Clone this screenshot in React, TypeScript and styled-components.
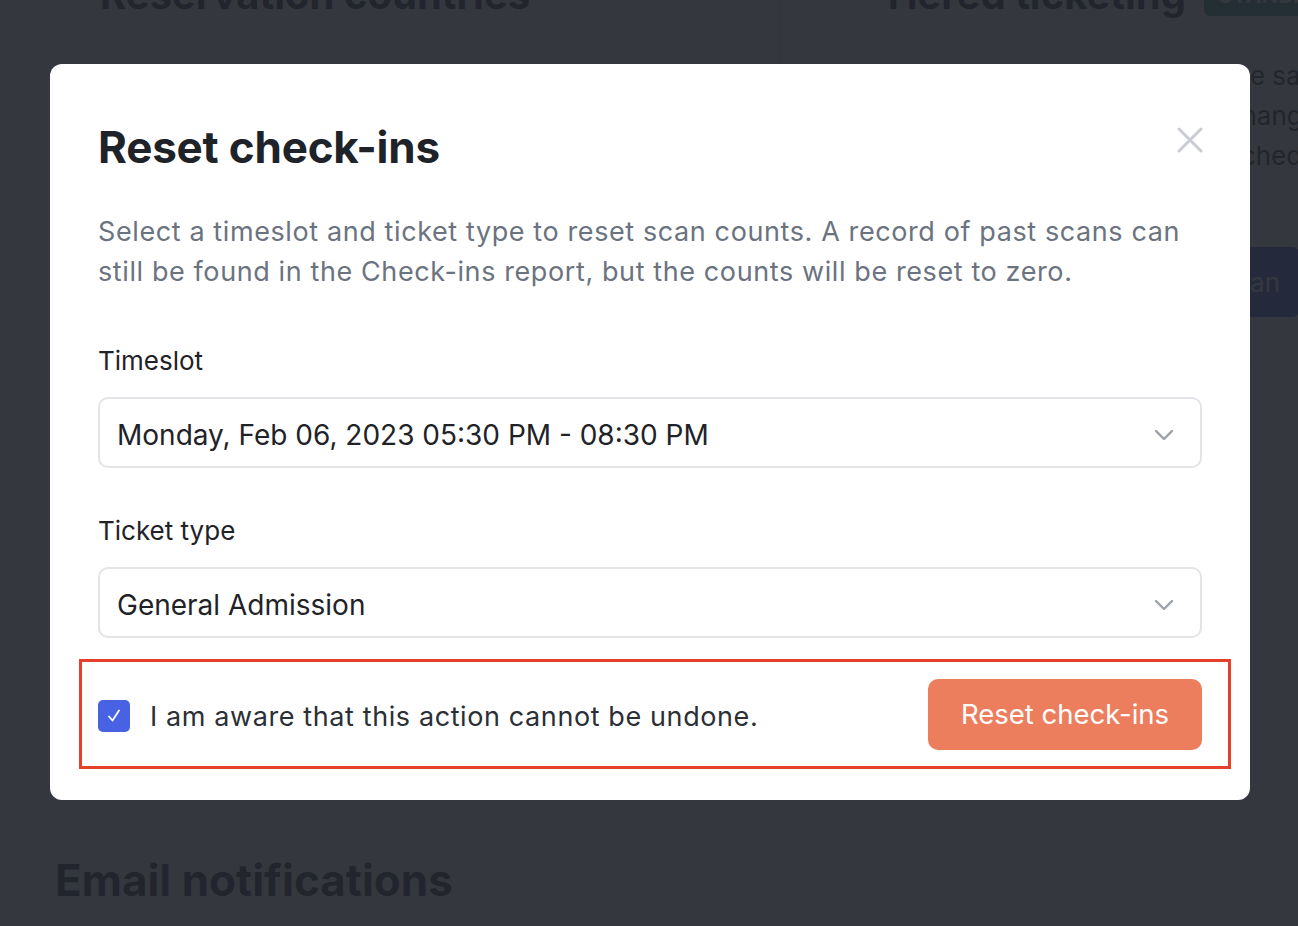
import React, { useState } from 'react';
import styled, { createGlobalStyle } from 'styled-components';

const GlobalStyle = createGlobalStyle`
  html, body {
    margin: 0;
    padding: 0;
    background: #ffffff;
    font-family: Inter, "Noto Sans", sans-serif;
    overflow: hidden;
  }
  * { box-sizing: border-box; }
`;

const Page = styled.div`
  width: 1298px;
  height: 926px;
  overflow: hidden;
  padding: 0 0 0 55px;
`;

const Columns = styled.div`
  display: grid;
  grid-template-columns: 725px 1fr;
  margin-top: -30px;
`;

const LeftCard = styled.div`
  border-right: 1px solid #d8dbe0;
  padding: 0 40px 0 45px;
  height: 340px;
`;

const RightCard = styled.div`
  padding: 0 0 0 100px;
  border-bottom: 1px solid #e4e6ea;
  height: 395px;
`;

const BgHeading = styled.h2`
  margin: 0;
  font-size: 40px;
  font-weight: 700;
  color: #1f2328;
  display: flex;
  align-items: center;
  gap: 18px;
  white-space: nowrap;
`;

const Badge = styled.span`
  background: #2a9d8f;
  color: #fff;
  font-size: 22px;
  padding: 8px 14px;
  border-radius: 6px;
`;

const BgText = styled.p<{ $top: number }>`
  margin: ${(p) => p.$top}px 0 0;
  font-size: 26px;
  line-height: 40px;
  color: #1f2328;
  white-space: nowrap;
`;

const BgLink = styled.span`
  color: #3b5bdb;
`;

const BgButton = styled.div`
  margin-top: 71px;
  margin-left: 240px;
  width: 180px;
  height: 70px;
  background: #3b5bdb;
  color: #fff;
  font-size: 26px;
  display: flex;
  align-items: center;
  justify-content: flex-end;
  padding-right: 20px;
  border-radius: 8px;
`;

const EmailHeading = styled.h2`
  margin: 488px 0 0;
  font-size: 44px;
  font-weight: 700;
  color: #1f2328;
`;

const Overlay = styled.div`
  position: fixed;
  inset: 0;
  background: rgba(35, 38, 46, 0.92);
  display: flex;
  align-items: flex-start;
  justify-content: flex-start;
  padding: 64px 0 0 50px;
`;

const Modal = styled.div`
  width: 1200px;
  height: 736px;
  background: #ffffff;
  border-radius: 12px;
  padding: 48px 48px 0 48px;
  display: flex;
  flex-direction: column;
`;

const Header = styled.div`
  display: flex;
  justify-content: space-between;
  align-items: flex-start;
  height: 70px;
`;

const Title = styled.h1`
  margin: 0;
  font-size: 44px;
  line-height: 70px;
  font-weight: 700;
  color: #1e2329;
  letter-spacing: -0.2px;
`;

const CloseButton = styled.button`
  border: none;
  background: none;
  padding: 0;
  width: 30px;
  height: 30px;
  margin-top: 13px;
  margin-right: -3px;
  display: flex;
  align-items: center;
  justify-content: center;
  cursor: pointer;
`;

const Description = styled.p`
  margin: 30px 0 0;
  font-size: 27px;
  letter-spacing: 0.6px;
  line-height: 40px;
  color: #6b7380;
`;

const Label = styled.div<{ $top: number }>`
  margin-top: ${(p) => p.$top}px;
  font-size: 26px;
  line-height: 36px;
  color: #1f2328;
`;

const Select = styled.div`
  margin-top: 18px;
  height: 71px;
  border: 2px solid #e2e4e8;
  border-radius: 10px;
  display: flex;
  align-items: center;
  justify-content: space-between;
  padding: 5px 26px 0 17px;
  font-size: 28px;
  color: #1f2328;
`;

const ConfirmRow = styled.div`
  margin: 21px -29px 0 -19px;
  border: 3px solid #e5402a;
  height: 110px;
  display: flex;
  align-items: center;
  justify-content: space-between;
  padding: 0 26px 0 16px;
`;

const CheckLabel = styled.label`
  display: flex;
  align-items: center;
  gap: 20px;
  padding-top: 4px;
  font-size: 27px;
  letter-spacing: 0.6px;
  color: #2b2f36;
  cursor: pointer;
`;

const CheckBox = styled.span<{ $checked: boolean }>`
  width: 32px;
  height: 32px;
  border-radius: 5px;
  background: ${(p) => (p.$checked ? '#4763e4' : '#fff')};
  border: ${(p) => (p.$checked ? 'none' : '2px solid #c4c8cf')};
  display: flex;
  align-items: center;
  justify-content: center;
`;

const ResetButton = styled.button`
  width: 274px;
  height: 71px;
  border: none;
  border-radius: 10px;
  background: #ec7e5e;
  color: #ffffff;
  font-family: inherit;
  font-size: 27.5px;
  cursor: pointer;
`;

const Chevron = () => (
  <svg width="20" height="12" viewBox="0 0 20 12" fill="none">
    <path d="M2 2l8 8 8-8" stroke="#9ba1a8" strokeWidth="2.4" strokeLinecap="round" strokeLinejoin="round" />
  </svg>
);

const App: React.FC = () => {
  const [checked, setChecked] = useState(true);

  return (
    <>
      <GlobalStyle />
      <Page>
        <Columns>
          <LeftCard>
            <BgHeading>Reservation countries</BgHeading>
            <BgText $top={45}>Add the countries in which you'd like to sell</BgText>
          </LeftCard>
          <RightCard>
            <BgHeading>
              Tiered ticketing <Badge>STANDARD</Badge>
            </BgHeading>
            <BgText $top={37}>
              Offer multiple price tiers for the same a<br />
              ticket type, and have prices change whe<br />
              a tier sells out or a date is reached. <BgLink>Le</BgLink>
            </BgText>
            <BgButton>Scan</BgButton>
          </RightCard>
        </Columns>
        <EmailHeading>Email notifications</EmailHeading>
      </Page>
      <Overlay>
        <Modal>
          <Header>
            <Title>Reset check-ins</Title>
            <CloseButton aria-label="Close">
              <svg width="26" height="26" viewBox="0 0 26 26" fill="none">
                <path d="M2 2l22 22M24 2L2 24" stroke="#c9cdd2" strokeWidth="3" strokeLinecap="round" />
              </svg>
            </CloseButton>
          </Header>
          <Description>
            Select a timeslot and ticket type to reset scan counts. A record of past scans can still be
            found in the Check-ins report, but the counts will be reset to zero.
          </Description>
          <Label $top={51}>Timeslot</Label>
          <Select>
            <span>Monday, Feb 06, 2023 05:30 PM - 08:30 PM</span>
            <Chevron />
          </Select>
          <Label $top={45}>Ticket type</Label>
          <Select>
            <span>General Admission</span>
            <Chevron />
          </Select>
          <ConfirmRow>
            <CheckLabel onClick={() => setChecked(!checked)}>
              <CheckBox $checked={checked}>
                {checked && (
                  <svg width="18" height="18" viewBox="0 0 18 18" fill="none">
                    <path d="M4 9.5l3.5 4L14 3.5" stroke="#fff" strokeWidth="1.8" strokeLinecap="round" strokeLinejoin="round" />
                  </svg>
                )}
              </CheckBox>
              I am aware that this action cannot be undone.
            </CheckLabel>
            <ResetButton>Reset check-ins</ResetButton>
          </ConfirmRow>
        </Modal>
      </Overlay>
    </>
  );
};

export default App;
